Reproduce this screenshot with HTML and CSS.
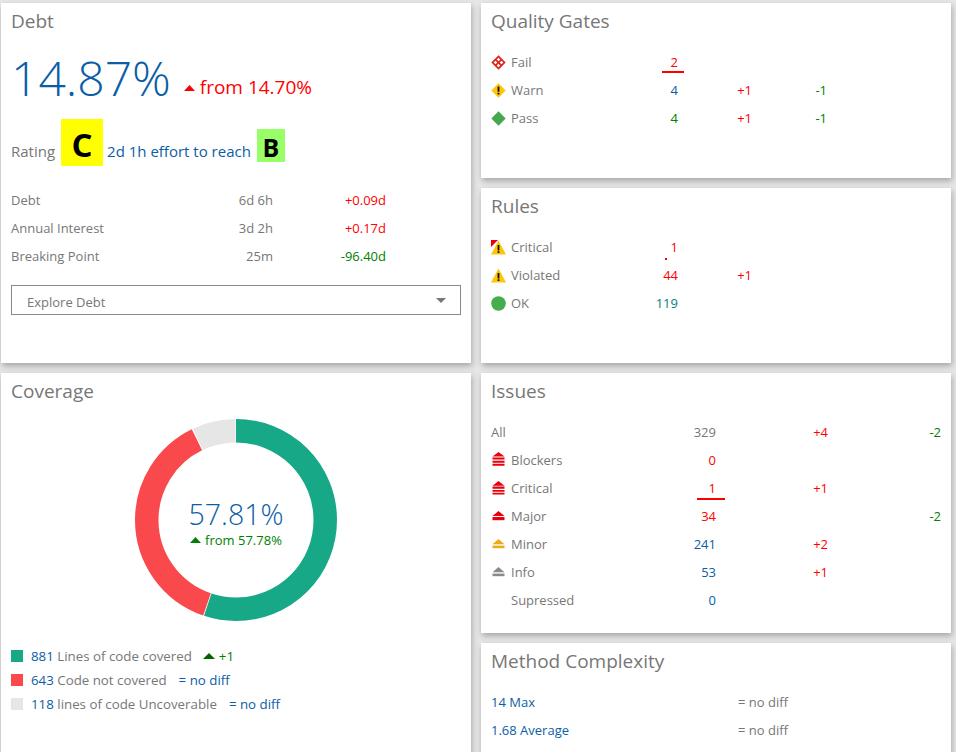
FILE: index.html
```html
<!DOCTYPE html>
<html>

<head>
  <title>Dashboard</title>
  <link rel="stylesheet" href="styles.css">
</head>

<body>
  <div class="dashboard">
    <div class="column">
      <section class="card debt-card">
        <h2>Debt</h2>
        <div class="hero">
          <span class="hero-value">14.87%</span>
          <svg class="hero-arrow" width="11" height="6" viewBox="0 0 11 6"><path d="M5.5 0L11 6H0z" fill="#f00"/></svg>
          <span class="hero-from">from 14.70%</span>
        </div>
        <div class="rating">
          <span class="label">Rating</span>
          <span class="grade grade-c">C</span>
          <span class="blue">2d 1h effort to reach</span>
          <span class="grade grade-b">B</span>
        </div>
        <div class="rows debt-rows">
          <div class="row"><span class="label">Debt</span><span class="num label">6d 6h</span><span class="num red">+0.09d</span></div>
          <div class="row"><span class="label">Annual Interest</span><span class="num label">3d 2h</span><span class="num red">+0.17d</span></div>
          <div class="row"><span class="label">Breaking Point</span><span class="num label">25m</span><span class="num green">-96.40d</span></div>
        </div>
        <div class="select">
          <span class="label">Explore Debt</span>
          <span class="caret"></span>
        </div>
      </section>

      <section class="card coverage-card">
        <h2>Coverage</h2>
        <div class="donut">
          <svg width="202" height="202" viewBox="0 0 202 202">
            <g fill="none" stroke-width="23.5" transform="rotate(-90 101 101)">
              <circle cx="101" cy="101" r="89.25" pathLength="360" stroke="#17a888" stroke-dasharray="198.5 360"/>
              <circle cx="101" cy="101" r="89.25" pathLength="360" stroke="#fa494d" stroke-dasharray="135 360" stroke-dashoffset="-199"/>
              <circle cx="101" cy="101" r="89.25" pathLength="360" stroke="#e6e6e6" stroke-dasharray="25 360" stroke-dashoffset="-334.7"/>
            </g>
          </svg>
          <div class="donut-text">
            <div class="donut-value">57.81%</div>
            <div class="donut-from">
              <svg width="11" height="6" viewBox="0 0 11 6"><path d="M5.5 0L11 6H0z" fill="#008000"/></svg>
              <span>from 57.78%</span>
            </div>
          </div>
        </div>
        <div class="legend">
          <div class="legend-row">
            <span class="swatch swatch-green"></span>
            <span><span class="blue">881</span> <span class="label">Lines of code covered</span></span>
            <svg class="legend-arrow" width="12" height="6" viewBox="0 0 12 6"><path d="M6 0L12 6H0z" fill="#006400"/></svg>
            <span class="green">+1</span>
          </div>
          <div class="legend-row">
            <span class="swatch swatch-red"></span>
            <span><span class="blue">643</span> <span class="label">Code not covered</span></span>
            <span class="blue legend-diff">= no diff</span>
          </div>
          <div class="legend-row">
            <span class="swatch swatch-grey"></span>
            <span><span class="blue">118</span> <span class="label">lines of code Uncoverable</span></span>
            <span class="blue legend-diff">= no diff</span>
          </div>
        </div>
      </section>
    </div>

    <div class="column">
      <section class="card small-card">
        <h2>Quality Gates</h2>
        <div class="rows gate-rows">
          <div class="row">
            <span class="name">
              <svg class="icon" width="15" height="15" viewBox="0 0 15 15">
                <path d="M7.5 0.3L14.7 7.5L7.5 14.7L0.3 7.5z" fill="#e2231a"/>
                <path d="M7.5 2.7L9.3 4.5L7.5 6.3L5.7 4.5zM4.5 5.7L6.3 7.5L4.5 9.3L2.7 7.5zM10.5 5.7L12.3 7.5L10.5 9.3L8.7 7.5zM7.5 8.7L9.3 10.5L7.5 12.3L5.7 10.5z" fill="#fff"/>
              </svg>
              <span class="label">Fail</span>
            </span>
            <span class="num red flagged flag-gate">2</span>
          </div>
          <div class="row">
            <span class="name">
              <svg class="icon" width="15" height="15" viewBox="0 0 15 15">
                <path d="M7.5 0.3L14.7 7.5L7.5 14.7L0.3 7.5z" fill="#fdc60a"/>
                <path d="M6.6 3.6h1.8v5.2H6.6zM6.6 9.8h1.8v1.7H6.6z" fill="#111"/>
              </svg>
              <span class="label">Warn</span>
            </span>
            <span class="num blue">4</span><span class="num red">+1</span><span class="num green">-1</span>
          </div>
          <div class="row">
            <span class="name">
              <svg class="icon" width="15" height="15" viewBox="0 0 15 15"><path d="M7.5 0.3L14.7 7.5L7.5 14.7L0.3 7.5z" fill="#46a74e"/></svg>
              <span class="label">Pass</span>
            </span>
            <span class="num green">4</span><span class="num red">+1</span><span class="num green">-1</span>
          </div>
        </div>
      </section>

      <section class="card small-card">
        <h2>Rules</h2>
        <div class="rows gate-rows">
          <div class="row">
            <span class="name">
              <svg class="icon" width="15" height="15" viewBox="0 0 15 15">
                <path d="M7.5 0.5L15 14.5H0z" fill="#fdc60a"/>
                <path d="M0 0H7L0 7z" fill="#e8000d"/>
                <path d="M6.6 5h1.8v5.4H6.6zM6.6 11.2h1.8v1.8H6.6z" fill="#111"/>
              </svg>
              <span class="label">Critical</span>
            </span>
            <span class="num red flagged flag-dot">1</span>
          </div>
          <div class="row">
            <span class="name">
              <svg class="icon" width="15" height="15" viewBox="0 0 15 15">
                <path d="M7.5 0.5L15 14.5H0z" fill="#fdc60a"/>
                <path d="M6.6 5h1.8v5.4H6.6zM6.6 11.2h1.8v1.8H6.6z" fill="#111"/>
              </svg>
              <span class="label">Violated</span>
            </span>
            <span class="num red">44</span><span class="num red">+1</span>
          </div>
          <div class="row">
            <span class="name">
              <svg class="icon" width="15" height="15" viewBox="0 0 15 15"><circle cx="7.5" cy="7.5" r="7.3" fill="#46ad4e"/></svg>
              <span class="label">OK</span>
            </span>
            <span class="num teal">119</span>
          </div>
        </div>
      </section>

      <section class="card issues-card">
        <h2>Issues</h2>
        <div class="rows issue-rows">
          <div class="row">
            <span class="label">All</span>
            <span class="num label">329</span><span class="num red">+4</span><span class="num green">-2</span>
          </div>
          <div class="row">
            <span class="name">
              <svg class="icon" width="15" height="16" viewBox="0 0 15 16" fill="#e8000d"><path d="M7.5 0L13.5 4.6H1.5z"/><path d="M1.5 5.6h12v2h-12zM1.5 8.7h12v2h-12zM1.5 11.8h12v2h-12z"/></svg>
              <span class="label">Blockers</span>
            </span>
            <span class="num red">0</span>
          </div>
          <div class="row">
            <span class="name">
              <svg class="icon" width="15" height="14" viewBox="0 0 15 14" fill="#e8000d"><path d="M7.5 0L13.5 4.8H1.5z"/><path d="M1.5 5.6h12v2.2h-12zM1.5 9h12v1.8h-12zM1.5 11.8h12v1.8h-12z"/></svg>
              <span class="label">Critical</span>
            </span>
            <span class="num red flagged flag-issue">1</span><span class="num red">+1</span>
          </div>
          <div class="row">
            <span class="name">
              <svg class="icon" width="15" height="11" viewBox="0 0 15 11" fill="#e8000d"><path d="M7.5 0L13.5 5H1.5z"/><path d="M1.5 6h12v3.2h-12z"/></svg>
              <span class="label">Major</span>
            </span>
            <span class="num red">34</span><span class="num"></span><span class="num green">-2</span>
          </div>
          <div class="row">
            <span class="name">
              <svg class="icon" width="15" height="11" viewBox="0 0 15 11" fill="#e9ab17"><path d="M7.5 0L13.5 5.2H1.5z"/><path d="M1.5 6.6h12v2.6h-12z"/></svg>
              <span class="label">Minor</span>
            </span>
            <span class="num blue">241</span><span class="num red">+2</span>
          </div>
          <div class="row">
            <span class="name">
              <svg class="icon" width="15" height="11" viewBox="0 0 15 11" fill="#8a8a8a"><path d="M7.5 0L13.5 5.2H1.5z"/><path d="M1.5 6.6h12v2.6h-12z"/></svg>
              <span class="label">Info</span>
            </span>
            <span class="num blue">53</span><span class="num red">+1</span>
          </div>
          <div class="row">
            <span class="name">
              <span class="icon"></span>
              <span class="label">Supressed</span>
            </span>
            <span class="num blue">0</span>
          </div>
        </div>
      </section>

      <section class="card method-card">
        <h2>Method Complexity</h2>
        <div class="rows method-rows">
          <div class="row"><span class="blue">14 Max</span><span class="label">= no diff</span></div>
          <div class="row"><span class="blue">1.68 Average</span><span class="label">= no diff</span></div>
        </div>
      </section>
    </div>
  </div>
</body>

</html>
```

FILE: styles.css
```css
html,
body {
  height: 752px;
  margin: 0;
  overflow: hidden;
}

body {
  background-color: #e6e6e6;
  font-family: "Open Sans", "Noto Sans", sans-serif;
  font-size: 13px;
  color: #777;
}

.dashboard {
  display: flex;
  gap: 10px;
  height: 752px;
  padding: 3px 0 0 1px;
  box-sizing: border-box;
  overflow: hidden;
}

.column {
  display: flex;
  flex-direction: column;
  gap: 10px;
  width: 470px;
}

.card {
  box-sizing: border-box;
  flex: none;
  padding: 0 10px;
  background: #fff;
  box-shadow: 1px 3px 6px rgba(0, 0, 0, 0.28);
}

.debt-card {
  height: 360px;
}

.coverage-card {
  height: 420px;
}

.small-card {
  height: 175px;
}

.issues-card {
  height: 260px;
}

.method-card {
  height: 200px;
}

h2 {
  height: 36px;
  margin: 0;
  font-size: 19px;
  font-weight: 400;
  line-height: 36px;
  color: #777;
}

.label {
  color: #777;
}

.blue {
  color: #0b5ea6;
}

.red {
  color: #f00;
}

.green {
  color: #008000;
}

.teal {
  color: #00807a;
}

.num {
  text-align: right;
}

/* debt */
.hero {
  display: flex;
  align-items: baseline;
  height: 77px;
  line-height: 78px;
}

.hero-value {
  font-size: 48px;
  font-weight: 300;
  color: #0b5ea6;
}

.hero-arrow {
  align-self: flex-start;
  margin: 46px 5px 0 13px;
}

.hero-from {
  font-size: 19px;
  position: relative;
  top: -2px;
  color: #f00;
}

.rating {
  display: flex;
  align-items: baseline;
  gap: 5px;
  margin-top: 3px;
  height: 67px;
  font-size: 15px;
}

.grade {
  font-weight: 700;
  color: #000;
  text-align: center;
}

.grade-c {
  width: 42px;
  height: 47px;
  margin: 0 -1px 0 1px;
  background: #ff0;
  font-size: 33px;
  line-height: 51px;
}

.grade-b {
  width: 28px;
  height: 33px;
  margin-left: 1px;
  background: #9f6;
  font-size: 25px;
  line-height: 37px;
}

/* rows */
.row {
  display: grid;
  align-items: center;
  height: 28px;
}

.name {
  display: flex;
  align-items: center;
  gap: 5px;
}

.icon {
  display: block;
  flex: none;
  width: 15px;
}

.debt-rows .row {
  grid-template-columns: 202px 60px 113px;
}

.gate-rows {
  margin-top: 9px;
}

.gate-rows .row {
  grid-template-columns: 137px 50px 74px 75px;
}

.issue-rows {
  margin-top: 9px;
}

.issue-rows .row {
  grid-template-columns: 165px 60px 112px 113px;
}

.method-rows {
  margin-top: 9px;
}

.method-rows .row {
  grid-template-columns: 247px 1fr;
}

.flagged {
  position: relative;
}

.flagged::after {
  content: "";
  position: absolute;
  background: #f00;
}

.flag-gate::after {
  right: -6px;
  bottom: -2px;
  width: 22px;
  height: 2px;
}

.flag-issue::after {
  right: -9px;
  bottom: -3px;
  width: 28px;
  height: 2px;
}

.flag-dot::after {
  right: 11px;
  bottom: -4px;
  width: 2px;
  height: 2px;
}

/* dropdown */
.select {
  box-sizing: border-box;
  display: flex;
  align-items: center;
  justify-content: space-between;
  height: 30px;
  margin-top: 15px;
  padding: 4px 14px 0 15px;
  border: 1px solid #8a8a8a;
}

.caret {
  margin-top: -4px;
  border-top: 5px solid #777;
  border-left: 5px solid transparent;
  border-right: 5px solid transparent;
}

/* coverage */
.donut {
  position: relative;
  width: 202px;
  height: 202px;
  margin: 10px auto 0;
}

.donut svg {
  display: block;
}

.donut-text {
  position: absolute;
  top: 79px;
  left: 0;
  right: 0;
  text-align: center;
}

.donut-value {
  font-size: 28.5px;
  font-weight: 300;
  line-height: 33px;
  color: #0b5ea6;
}

.donut-from {
  display: flex;
  align-items: center;
  justify-content: center;
  gap: 4px;
  color: #008000;
}

.legend {
  margin-top: 23px;
  font-size: 13.3px;
}

.legend-row {
  display: flex;
  align-items: center;
  height: 24px;
}

.swatch {
  width: 12px;
  height: 12px;
  margin-right: 8px;
}

.swatch-green {
  background: #17a888;
}

.swatch-red {
  background: #fa494d;
}

.swatch-grey {
  background: #e6e6e6;
}

.legend-arrow {
  margin: 0 4px 0 11px;
}

.legend-diff {
  margin-left: 12px;
}
```
